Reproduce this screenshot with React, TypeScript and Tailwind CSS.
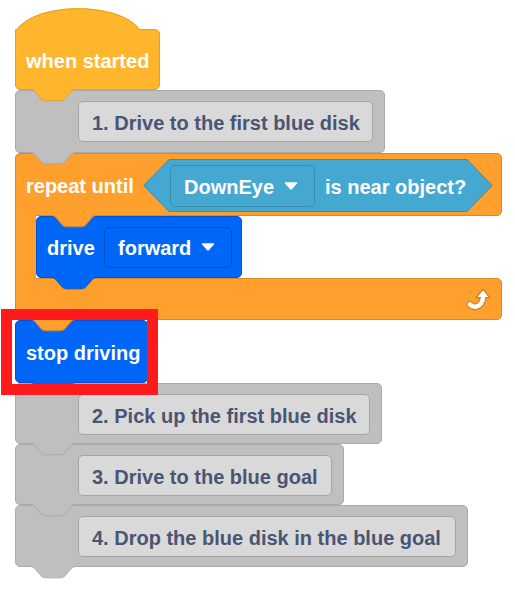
import React from "react";

function Tab({ fill, stroke, pos }: { fill: string; stroke: string; pos: string }) {
  return (
    <svg
      className={`absolute top-full z-10 ${pos}`}
      width="46"
      height="13"
      viewBox="0 0 46 13"
    >
      <path
        d="M0 0 C2 0 3.5 0.8 5 2.2 L11 9.5 C12.5 11.1 14 11.5 16 11.5 H30 C32 11.5 33.5 11.1 35 9.5 L41 2.2 C42.5 0.8 44 0 46 0 Z"
        fill={fill}
      />
      <path
        d="M0 0.5 C2 0.5 3.5 1.3 5 2.7 L11 9.8 C12.5 11.4 14 11.8 16 11.8 H30 C32 11.8 33.5 11.4 35 9.8 L41 2.7 C42.5 1.3 44 0.5 46 0.5"
        fill="none"
        stroke={stroke}
        strokeWidth="1"
      />
    </svg>
  );
}

function Caret() {
  return (
    <svg width="14" height="8" viewBox="0 0 14 8" className="shrink-0">
      <path d="M1.5 1 H12.5 L7 7 Z" fill="#ffffff" stroke="#ffffff" strokeWidth="1.5" strokeLinejoin="round" />
    </svg>
  );
}

function Arrow() {
  return (
    <svg width="26" height="22" viewBox="0 0 26 22" className="shrink-0">
      <path d="M4 16.5 C7 20 15.5 20 17 10" fill="none" stroke="#cf7d1c" strokeWidth="6.5" strokeLinecap="round" />
      <path d="M10.5 9.5 L17 1.5 L23.5 9.5 Z" fill="#ffffff" stroke="#cf7d1c" strokeWidth="1.4" strokeLinejoin="round" />
      <path d="M4 16.5 C7 20 15.5 20 17 10" fill="none" stroke="#ffffff" strokeWidth="4.5" strokeLinecap="round" />
      <path d="M11.5 9 L17 2.5 L22.5 9 Z" fill="#ffffff" />
    </svg>
  );
}

function Comment({ size, children }: { size: string; children: React.ReactNode }) {
  return (
    <div
      className={`relative flex items-start bg-[#BFBFBF] border border-[#AAAAAA] rounded-[5px] pl-[62px] pr-[11px] pt-[10px] ${size}`}
    >
      <div className="h-[41px] flex-1 flex items-center pl-[13px] pt-[2px] bg-[#D9D9D9] border border-[#A6A6A6] rounded-[5px] text-[#4A5573] whitespace-nowrap">
        {children}
      </div>
      <Tab fill="#BFBFBF" stroke="#AAAAAA" pos="left-[14px]" />
    </div>
  );
}

export default function App() {
  return (
    <div className="relative w-[515px] h-[598px] bg-white pt-[6px] pl-[15px] [font-family:'Liberation_Sans',Arial,sans-serif] text-[20px] font-bold leading-none overflow-hidden">
      <div className="flex flex-col items-start">
        {/* Hat block */}
        <div className="relative mt-[23px] h-[61px] w-[145px] flex items-center pl-[10px] pt-[3px] bg-[#FFB62C] border border-[#E5A024] rounded-[5px] rounded-tl-none text-white">
          <svg className="absolute left-[-1px] top-[-24px]" width="128" height="27" viewBox="0 0 128 27">
            <path d="M1 27 L1 24.5 C20 -5 104 -5 124.5 23 L126 27 Z" fill="#FFB62C" />
            <path d="M0.5 25 C20 -4.5 104 -4.5 124.5 23.5 L128 23.5" fill="none" stroke="#E5A024" strokeWidth="1" />
          </svg>
          <span className="relative">when started</span>
          <Tab fill="#FFB62C" stroke="#E5A024" pos="left-[14px]" />
        </div>

        <Comment size="w-[370px] h-[63px]">1. Drive to the first blue disk</Comment>

        {/* Repeat until */}
        <div className="relative flex flex-col w-[487px]">
          <div className="relative h-[63px] flex items-center pl-[10px] bg-[#FF9F2D] border border-[#DC8824] rounded-[5px] rounded-bl-none text-white">
            <span className="w-[117px] pt-[2px] whitespace-nowrap">repeat until</span>
            <div className="relative w-[350px] h-[53px] mt-[2px] flex items-center pl-[27px]">
              <svg className="absolute inset-0" width="350" height="53" viewBox="0 0 350 53">
                <polygon
                  points="0.8,26.5 26,0.5 324,0.5 349.2,26.5 324,52.5 26,52.5"
                  fill="#45A8D1"
                  stroke="#3A8DB2"
                  strokeWidth="1"
                  strokeLinejoin="round"
                />
              </svg>
              <div className="relative w-[145px] h-[42px] flex items-center pl-[13px] pr-[16px] bg-[#45A8D1] border border-[#3A8CB0] rounded-[5px]">
                <span className="pt-[2px]">DownEye</span>
                <span className="ml-auto">
                  <Caret />
                </span>
              </div>
              <span className="relative ml-[10px] pt-[2px] whitespace-nowrap">is near object?</span>
            </div>
            <Tab fill="#FF9F2D" stroke="#DC8824" pos="left-[35px]" />
          </div>

          <div className="flex h-[62px]">
            <div className="relative z-[1] -my-px w-[21px] h-[64px] bg-[#FF9F2D] border-l border-[#DC8824]" />
            <div className="relative w-[206px] h-[62px] flex items-center pl-[10px] bg-[#0066F7] border border-[#0052D0] rounded-[5px] text-white">
              <span className="w-[57px] pt-[2px]">drive</span>
              <div className="w-[128px] h-[41px] flex items-center pl-[13px] pr-[16px] bg-[#0066F7] border border-[#0050C8] rounded-[5px]">
                <span className="pt-[2px]">forward</span>
                <span className="ml-auto">
                  <Caret />
                </span>
              </div>
              <Tab fill="#0066F7" stroke="#0052D0" pos="left-[14px]" />
            </div>
          </div>

          <div className="relative h-[42px] flex items-center justify-end pr-[9px] bg-[#FF9F2D] border border-[#DC8824] rounded-[5px] rounded-tl-none">
            <Arrow />
            <Tab fill="#FF9F2D" stroke="#DC8824" pos="left-[14px]" />
          </div>
        </div>

        {/* stop driving */}
        <div className="relative w-[133px] h-[63px] flex items-center pl-[10px] pt-[2px] bg-[#0066F7] border border-[#0052D0] rounded-[5px] text-white">
          <span className="whitespace-nowrap">stop driving</span>
          <Tab fill="#0066F7" stroke="#0052D0" pos="left-[14px]" />
          <div className="absolute left-[-15px] top-[-12px] w-[157px] h-[86px] border-[11px] border-[#FF1B1B] z-20" />
        </div>

        <Comment size="w-[367px] h-[61px]">2. Pick up the first blue disk</Comment>
        <Comment size="w-[329px] h-[61px]">3. Drive to the blue goal</Comment>
        <Comment size="w-[453px] h-[62px]">4. Drop the blue disk in the blue goal</Comment>
      </div>
    </div>
  );
}
